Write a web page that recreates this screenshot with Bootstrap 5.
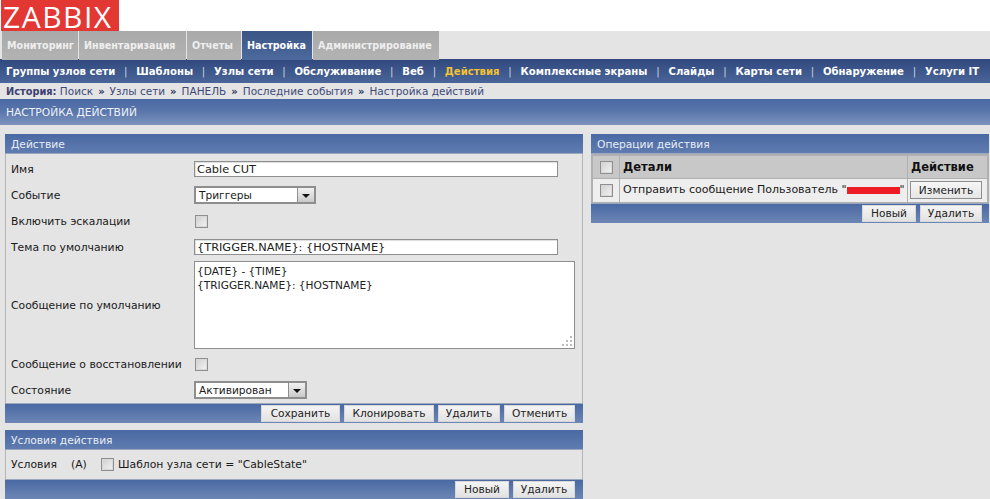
<!DOCTYPE html>
<html lang="ru">
<head>
<meta charset="utf-8">
<title>Настройка действий</title>
<link href="https://cdn.jsdelivr.net/npm/bootstrap@5.3.0/dist/css/bootstrap.min.css" rel="stylesheet">
<style>
html,body{height:499px;overflow:hidden}
body{background:#e4e4e4;font-family:"DejaVu Sans",Verdana,sans-serif;font-size:10.8px;line-height:13px;color:#1a1a1a}
.zbx-top{background:#fff;height:31px;padding-left:1px}
.zbx-logo{background:#e33734;color:#fff;width:118px;height:31px;font-family:"Open Sans",sans-serif;font-weight:400;font-size:30px;line-height:33px;padding-left:2px;letter-spacing:1.5px}
.zbx-tabs{height:28px;padding-left:2px;display:grid;grid-template-columns:76px 107px 54px 70px 126px;gap:1px}
.zbx-tab{background:linear-gradient(#a9a9a9,#b3b3b3);color:#eee;font-weight:700;font-size:9.6px;padding-left:5px;line-height:29px;white-space:nowrap}
.zbx-tab-on{background:linear-gradient(#3a5585,#4d6a9d);color:#fff}
.zbx-sub{height:24px;background:linear-gradient(#30487d,#4a6599);color:#fff;font-weight:700;font-size:10.1px;line-height:25px;padding-left:6px;white-space:nowrap}
.zbx-sub a{color:#fff;text-decoration:none}
.zbx-sub a.zbx-cur{color:#f1c232}
.zbx-sep{color:#c9d2e2;font-weight:400;width:21px;text-align:center;flex:none}
.zbx-crumbs{height:16px;line-height:17px;padding-left:6px;color:#3c4a7a;font-size:10.5px;white-space:nowrap}
.zbx-crumbs b{color:#3c3f70;font-size:9.8px}
.zbx-crumbs i{font-style:normal;font-weight:700;color:#26305a;padding:0 5px;font-size:10px}
.zbx-head{height:26px;line-height:28px;padding-left:6px;color:#eef1f6;background:linear-gradient(#4a69a3,#5a77ac 50%,#7d94bd);font-size:10.7px;margin-bottom:9px}
.zbx-cols{padding-left:5px;gap:8px}
.zbx-left{width:578px;flex:none}
.zbx-right{width:398px;flex:none}
.zbx-ttl{height:20px;line-height:21px;padding-left:6px;color:#e9edf4;background:linear-gradient(#4a69a3,#5f7cb0);font-size:10.7px;border-bottom:1px solid #9aa7bd}
.zbx-body{border-left:1px solid #b5b5b5;border-right:1px solid #b5b5b5;padding-top:2px}
.zbx-row{height:26px;padding-left:5px}
.zbx-row.zbx-tall{height:91px}
.zbx-lab{width:183px;flex:none}
.zbx-lab + .zbx-chk{margin-left:1px}
.zbx-inp{background:#fff;border:1px solid #8e8e8e;height:16px;line-height:14px;padding:0 2px;font-size:11.35px;color:#222;width:364px;box-shadow:inset 1px 1px 1px #ddd}
.zbx-sel{background:#fff;border:2px solid #8e8e8e;height:18px;line-height:14px;padding-left:3px;font-size:10.6px;justify-content:space-between}
.zbx-sel-a{width:122px}
.zbx-sel-b{width:113px}
.zbx-arr{width:17px;height:14px;background:linear-gradient(#f2f2f2,#c9c9c9);border-left:1px solid #8e8e8e;flex:none;display:flex;align-items:center;justify-content:center}
.zbx-arr::after{content:"";border-left:4px solid transparent;border-right:4px solid transparent;border-top:4px solid #111;margin-top:1px}
.zbx-chk{appearance:none;display:block;width:13px;height:13px;flex:none;margin:0;border:1px solid #8f8f8f;outline:1px solid #d8d8d8;outline-offset:-2px;background:linear-gradient(135deg,#cfcfcf,#f4f4f4)}
.zbx-area{width:381px;height:88px;margin-top:1px;background:#fff;border:1px solid #8e8e8e;padding:2px;font-size:10.6px;line-height:14px;color:#222}
.zbx-grip{position:absolute;right:1px;bottom:1px;width:12px;height:12px}
.zbx-foot{height:20px;background:linear-gradient(#4a69a3,#6c86b5);border-top:1px solid #9aa7bd;padding-right:8px;gap:4px}
.zbx-right .zbx-foot{padding-right:7px}
.zbx-btn{height:17px;line-height:15px;background:linear-gradient(#f4f4f4,#e2e2e2);border:1px solid #d8d8d8;color:#222;font-size:10.6px;padding:0 4px;text-align:center}
.zbx-w79{width:79px}.zbx-w90{width:90px}.zbx-w62{width:62px}.zbx-w71{width:71px}.zbx-w54{width:54px}
.zbx-sec2{margin-top:7px}
.zbx-body2{height:29px;border-left:1px solid #b5b5b5;border-right:1px solid #b5b5b5;padding-left:5px}
.zbx-cl1{width:60px}
.zbx-cl2{width:30px}
.zbx-tbl{border:2px solid #b0b0b0;border-bottom-width:1px;background:#b0b0b0;display:grid;grid-template-columns:26px 287px 79px;gap:1px}
.zbx-th{background:#c8c8c8;height:22px;font-weight:700;font-size:11.5px;color:#111;line-height:22px;padding-left:3px}
.zbx-td{background:#eee;height:23px;line-height:21px;padding-left:3px;font-size:11px;color:#1a1a1a;white-space:nowrap;overflow:hidden}
.zbx-c{padding:0;display:flex;align-items:center;justify-content:center}
.zbx-act{padding:2px 0 0 2px;display:flex;align-items:flex-start}
.zbx-red{display:inline-block;width:53px;height:7px;background:#ee1c25;vertical-align:-1px}
.zbx-edit{height:18px;line-height:16px;width:72px;background:linear-gradient(#f6f6f6,#e6e6e6);border:1px solid #8e8e8e;text-align:center;color:#222;font-size:10.6px}
</style>
</head>
<body class="m-0">
<div class="zbx-top"><div class="zbx-logo">ZABBIX</div></div>
<div class="zbx-tabs">
  <div class="zbx-tab">Мониторинг</div>
  <div class="zbx-tab">Инвентаризация</div>
  <div class="zbx-tab">Отчеты</div>
  <div class="zbx-tab zbx-tab-on">Настройка</div>
  <div class="zbx-tab">Администрирование</div>
</div>
<nav class="zbx-sub d-flex">
  <a href="#">Группы узлов сети</a><span class="zbx-sep">|</span>
  <a href="#">Шаблоны</a><span class="zbx-sep">|</span>
  <a href="#">Узлы сети</a><span class="zbx-sep">|</span>
  <a href="#">Обслуживание</a><span class="zbx-sep">|</span>
  <a href="#">Веб</a><span class="zbx-sep">|</span>
  <a href="#" class="zbx-cur">Действия</a><span class="zbx-sep">|</span>
  <a href="#">Комплексные экраны</a><span class="zbx-sep">|</span>
  <a href="#">Слайды</a><span class="zbx-sep">|</span>
  <a href="#">Карты сети</a><span class="zbx-sep">|</span>
  <a href="#">Обнаружение</a><span class="zbx-sep">|</span>
  <a href="#">Услуги IT</a>
</nav>
<div class="zbx-crumbs"><b>История:</b> Поиск<i>»</i>Узлы сети<i>»</i>ПАНЕЛЬ<i>»</i>Последние события<i>»</i>Настройка действий</div>
<div class="zbx-head">НАСТРОЙКА ДЕЙСТВИЙ</div>
<div class="zbx-cols d-flex align-items-start">
  <div class="zbx-left">
    <div class="zbx-ttl">Действие</div>
    <div class="zbx-body">
      <div class="zbx-row d-flex align-items-center"><div class="zbx-lab">Имя</div><div class="zbx-inp">Cable CUT</div></div>
      <div class="zbx-row d-flex align-items-center"><div class="zbx-lab">Событие</div><div class="zbx-sel zbx-sel-a d-flex">Триггеры<span class="zbx-arr"></span></div></div>
      <div class="zbx-row d-flex align-items-center"><div class="zbx-lab">Включить эскалации</div><input type="checkbox" class="zbx-chk"></div>
      <div class="zbx-row d-flex align-items-center"><div class="zbx-lab">Тема по умолчанию</div><div class="zbx-inp">{TRIGGER.NAME}: {HOSTNAME}</div></div>
      <div class="zbx-row zbx-tall d-flex align-items-center"><div class="zbx-lab">Сообщение по умолчанию</div>
        <div class="zbx-area position-relative align-self-start">{DATE} - {TIME}<br>{TRIGGER.NAME}: {HOSTNAME}
          <svg class="zbx-grip" viewBox="0 0 12 12"><g fill="#bdbdbd"><rect x="9" y="1" width="2" height="2"/><rect x="5" y="5" width="2" height="2"/><rect x="9" y="5" width="2" height="2"/><rect x="1" y="9" width="2" height="2"/><rect x="5" y="9" width="2" height="2"/><rect x="9" y="9" width="2" height="2"/></g></svg>
        </div>
      </div>
      <div class="zbx-row d-flex align-items-center"><div class="zbx-lab">Сообщение о восстановлении</div><input type="checkbox" class="zbx-chk"></div>
      <div class="zbx-row d-flex align-items-center"><div class="zbx-lab">Состояние</div><div class="zbx-sel zbx-sel-b d-flex">Активирован<span class="zbx-arr"></span></div></div>
    </div>
    <div class="zbx-foot d-flex align-items-center justify-content-end">
      <div class="zbx-btn zbx-w79">Сохранить</div><div class="zbx-btn zbx-w90">Клонировать</div><div class="zbx-btn zbx-w62">Удалить</div><div class="zbx-btn zbx-w71">Отменить</div>
    </div>
    <div class="zbx-sec2">
      <div class="zbx-ttl">Условия действия</div>
      <div class="zbx-body2 d-flex align-items-center"><span class="zbx-cl1">Условия</span><span class="zbx-cl2">(А)</span><input type="checkbox" class="zbx-chk me-1"><span>Шаблон узла сети = "CableState"</span></div>
      <div class="zbx-foot d-flex align-items-center justify-content-end">
        <div class="zbx-btn zbx-w54">Новый</div><div class="zbx-btn zbx-w62">Удалить</div>
      </div>
    </div>
  </div>
  <div class="zbx-right">
    <div class="zbx-ttl">Операции действия</div>
    <div class="zbx-tbl">
      <div class="zbx-th zbx-c"><input type="checkbox" class="zbx-chk"></div>
      <div class="zbx-th">Детали</div>
      <div class="zbx-th">Действие</div>
      <div class="zbx-td zbx-c"><input type="checkbox" class="zbx-chk"></div>
      <div class="zbx-td">Отправить сообщение Пользователь "<span class="zbx-red"></span>"</div>
      <div class="zbx-td zbx-act"><div class="zbx-edit">Изменить</div></div>
    </div>
    <div class="zbx-foot d-flex align-items-center justify-content-end">
      <div class="zbx-btn zbx-w54">Новый</div><div class="zbx-btn zbx-w62">Удалить</div>
    </div>
  </div>
</div>
<script src="https://cdn.jsdelivr.net/npm/bootstrap@5.3.0/dist/js/bootstrap.bundle.min.js"></script>
</body>
</html>
